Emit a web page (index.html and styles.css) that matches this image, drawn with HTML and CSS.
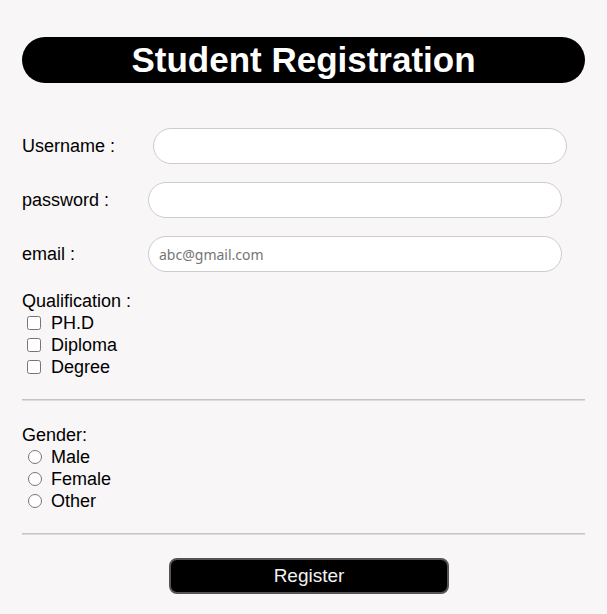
FILE: index.html
```html
<!DOCTYPE html>
<html lang="en">
<head>
<meta charset="utf-8">
<title>Student Registration</title>
<link rel="stylesheet" href="styles.css">
</head>
<body>
<div class="page">
  <h1 class="title">Student Registration</h1>
  <form class="form">
    <div class="row">
      <label class="label label-user" for="username">Username :</label>
      <input class="field" id="username" type="text">
    </div>
    <div class="row">
      <label class="label" for="password">password :</label>
      <input class="field" id="password" type="password">
    </div>
    <div class="row">
      <label class="label" for="email">email :</label>
      <input class="field" id="email" type="email" placeholder="abc@gmail.com">
    </div>

    <div class="group">
      <div class="group-title">Qualification :</div>
      <label class="option"><input class="check" type="checkbox"><span>PH.D</span></label>
      <label class="option"><input class="check" type="checkbox"><span>Diploma</span></label>
      <label class="option"><input class="check" type="checkbox"><span>Degree</span></label>
    </div>

    <hr class="divider divider-first">

    <div class="group group-gender">
      <div class="group-title">Gender:</div>
      <label class="option"><input class="radio" type="radio" name="gender"><span>Male</span></label>
      <label class="option"><input class="radio" type="radio" name="gender"><span>Female</span></label>
      <label class="option"><input class="radio" type="radio" name="gender"><span>Other</span></label>
    </div>

    <hr class="divider divider-second">

    <button class="submit" type="button">Register</button>
  </form>
</div>
</body>
</html>
```
FILE: styles.css
```css
html {
  background: #f8f6f7;
}

body {
  margin: 0;
  font-family: "Liberation Sans", Arial, sans-serif;
  color: #000;
}

.page {
  padding: 37px 22px 0;
}

.title {
  margin: 0;
  height: 46px;
  line-height: 46px;
  background: #000;
  color: #fff;
  border-radius: 23px;
  text-align: center;
  font-size: 35px;
  font-weight: bold;
}

.form {
  margin-top: 45px;
}

.row {
  display: flex;
  align-items: center;
  height: 36px;
  margin-bottom: 18px;
}

.label {
  width: 126px;
  flex: none;
  font-size: 18px;
}

.label-user {
  width: 131px;
}

.field {
  box-sizing: border-box;
  width: 414px;
  height: 36px;
  margin: 0;
  padding: 0 10px;
  border: 1px solid #cccccc;
  border-radius: 18px;
  background: #fff;
  font-family: "Noto Sans", sans-serif;
  font-size: 14px;
  color: #333;
  outline: none;
}

.field::placeholder {
  color: #757575;
}

.group {
  font-size: 18px;
  line-height: 22px;
}

.group-title {
  height: 22px;
}

.option {
  display: flex;
  align-items: center;
  height: 22px;
}

.check {
  width: 14px;
  height: 14px;
  margin: 0 10px 0 5px;
}

.radio {
  width: 14px;
  height: 14px;
  margin: 0 9px 0 6px;
}

.divider {
  height: 0;
  border: 0;
  border-top: 1px solid #c4c4c4;
  border-bottom: 1px solid #dcdcdc;
}

.divider-first {
  margin: 21px 0 23px;
}

.divider-second {
  margin: 21px 0 23px;
}

.submit {
  display: block;
  box-sizing: border-box;
  width: 280px;
  height: 36px;
  margin: 0 0 0 147px;
  padding: 0;
  background: #000;
  color: #f2f2f2;
  border: 2px solid #555;
  border-radius: 8px;
  font-family: "Liberation Sans", Arial, sans-serif;
  font-size: 19px;
}
```
